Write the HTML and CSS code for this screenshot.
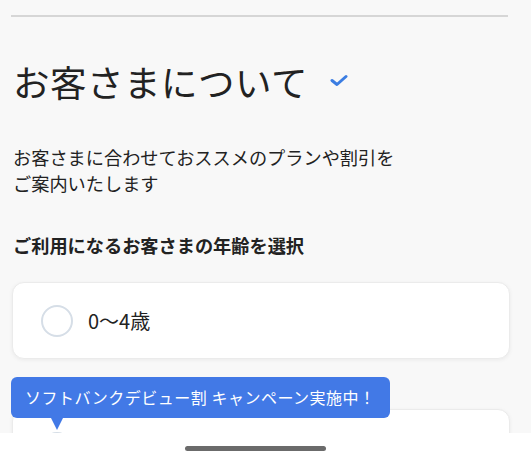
FILE: index.html
```html
<!DOCTYPE html>
<html lang="ja">
<head>
<meta charset="utf-8">
<link rel="stylesheet" href="styles.css">
</head>
<body>
<div class="page">
  <div class="rule"></div>
  <h1 class="title">お客さまについて<svg class="check" width="18" height="13" viewBox="0 0 18 13"><path d="M2 6.5 L7 10.5 L16 2.5" fill="none" stroke="#3b7de2" stroke-width="3" stroke-linecap="round" stroke-linejoin="round"/></svg></h1>
  <p class="lead">お客さまに合わせておススメのプランや割引を<br>ご案内いたします</p>
  <h2 class="label">ご利用になるお客さまの年齢を選択</h2>
  <div class="options">
    <div class="card"><span class="radio"></span><span class="opt">0〜4歳</span></div>
    <div class="card-wrap">
      <div class="tip">ソフトバンクデビュー割 キャンペーン実施中！</div>
      <div class="card"><span class="radio"></span></div>
    </div>
  </div>
</div>
<div class="homebar"><span class="indicator"></span></div>
</body>
</html>
```
FILE: styles.css
```css
html, body {
  margin: 0;
  padding: 0;
  background: #f8f8f8;
  height: 100%;
  overflow: hidden;
}
body {
  font-family: "Noto Sans CJK JP", "Noto Sans", sans-serif;
  color: #222;
}
.page {
  padding: 15px 23px 0 11px;
}
.rule {
  height: 2px;
  background: #d6d6d6;
}
.title {
  margin: 40px 0 0 2px;
  font-size: 36.5px;
  font-weight: 400;
  line-height: 50px;
  display: flex;
  align-items: center;
  letter-spacing: 0.5px;
}
.check {
  margin-left: 22px;
  margin-top: -4px;
}
.lead {
  margin: 37px 0 0 2px;
  font-size: 18.2px;
  line-height: 26px;
}
.label {
  margin: 36px 0 0 2px;
  font-size: 18.2px;
  line-height: 26px;
  font-weight: 700;
}
.options {
  margin-top: 24px;
  margin-right: -2px;
  display: flex;
  flex-direction: column;
  gap: 50px;
}
.card {
  margin-left: 1px;
  height: 75px;
  background: #fff;
  border: 1px solid #ebebeb;
  border-radius: 12px;
  box-shadow: 0 1px 4px rgba(0,0,0,0.06);
  display: flex;
  align-items: center;
  padding-left: 28px;
  gap: 15px;
}
.radio {
  width: 28px;
  height: 28px;
  border: 2px solid #d6dee7;
  border-radius: 50%;
  flex: none;
}
.opt {
  font-size: 20px;
}
.card-wrap {
  position: relative;
}
.tip {
  position: absolute;
  left: 0;
  top: -32px;
  z-index: 2;
  background: #4279e6;
  color: #fff;
  font-size: 16px;
  letter-spacing: 0.5px;
  line-height: 41px;
  padding: 0 14px;
  border-radius: 6px;
  white-space: nowrap;
}
.tip::after {
  content: "";
  position: absolute;
  left: 40px;
  bottom: -12px;
  border-left: 6px solid transparent;
  border-right: 6px solid transparent;
  border-top: 12px solid #4279e6;
}
.homebar {
  position: fixed;
  left: 0;
  right: 0;
  bottom: 0;
  height: 26px;
  background: #fff;
  z-index: 5;
  display: flex;
  justify-content: center;
  padding-top: 13px;
  padding-right: 20px;
  box-sizing: border-box;
}
.indicator {
  width: 141px;
  height: 5px;
  border-radius: 3px;
  background: #6b6b6b;
}
```
